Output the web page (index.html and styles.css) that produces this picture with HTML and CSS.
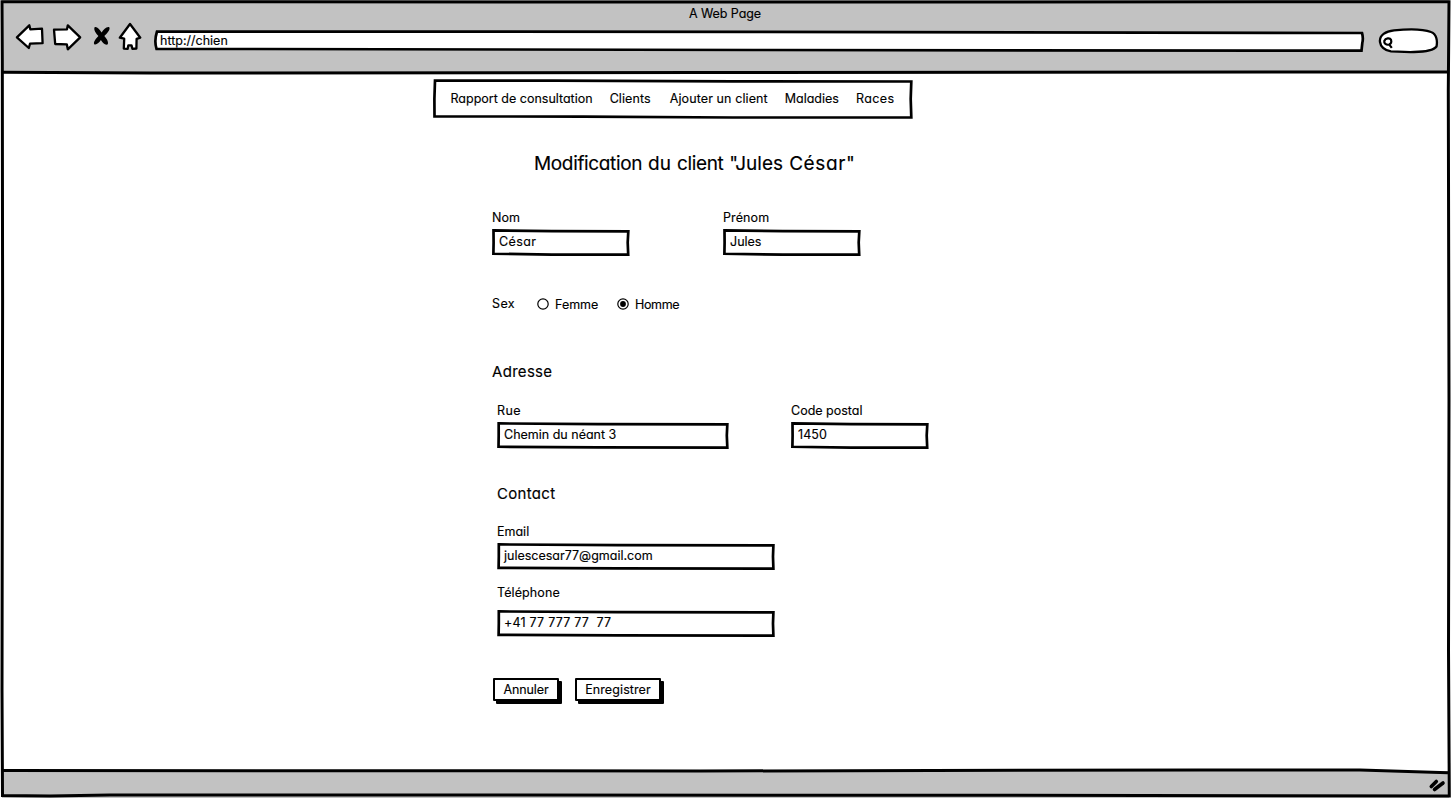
FILE: index.html
```html
<!DOCTYPE html>
<html lang="fr">
<head>
<meta charset="utf-8">
<title>A Web Page</title>
<link rel="stylesheet" href="styles.css">
</head>
<body>
<div class="browser">
  <header class="chrome">
    <div class="page-title"><span class="tight">A Web Page</span></div>
    <div class="toolbar">
      <svg class="nav-icons" width="128" height="30" viewBox="15 22 128 30">
        <g fill="#fff" stroke="#000" stroke-width="2.300" stroke-linejoin="round">
          <path d="M16.900 37.300L29.300 25.300L30.300 29.300L42 28.700L42.600 43.200L30 43.700L28.800 48Z"/>
          <path d="M54 29.600L67 29.300L67.800 25.300L80.200 37.300L67.800 49.300L66.800 44.300L55.200 44Z"/>
          <path d="M130 24L140.300 37.700L136.600 38.800L136.400 48.500L132.400 48.800L131.500 45.400L128.300 45.400L127.700 48.800L123.800 48.600L124.200 38.600L119.800 37.700Z"/>
        </g>
        <path d="M94.600 27.200C97 26.300 99.600 29.600 101.600 32.600C103.500 29.500 106.400 26.500 109.300 27.200C110.600 29.500 107 33.500 104.300 36C106.500 38.500 108.800 41.600 107.800 44.300C105.300 45.700 102.600 42.600 100.900 40C99 42.600 96.700 45.300 94.200 44.300C93.100 41.900 96.100 38.400 98.400 36C96 33.400 93.400 29.900 94.600 27.200Z"/>
      </svg>
      <div class="address">
        <svg class="sketch" viewBox="0 0 1210 22" preserveAspectRatio="none"><path class="ink" d="M3 1.500L600 1.800L1208 3Q1209.500 8 1208.300 13L1207.500 20.700L600 20L2.500 18.800Q0 11 3 1.500Z"/></svg>
        <span>http://chien</span>
      </div>
      <svg class="search" width="62" height="28" viewBox="1378 27 62 28">
        <path d="M1380 42C1379 35 1386 31.200 1394 30.400C1408 29 1424 29.400 1431 32C1437 34 1437.500 42 1436.500 46.500C1434 50 1424 51.800 1414 52C1404 52.300 1398 51.500 1391 51.300C1384 50.500 1380.500 46 1380 42Z" fill="#fff" stroke="#000" stroke-width="2.300"/>
        <path d="M1389.300 44.600C1386 45.300 1383.800 43.300 1384.300 41C1385.500 38 1389.900 37.600 1391 39.800C1391.800 42 1391 44 1389 44.400M1388.700 43.800L1391.800 47.800" fill="none" stroke="#000" stroke-width="2.200"/>
      </svg>
    </div>
  </header>
  <main class="content">
    <nav class="menu">
      <svg class="sketch" viewBox="0 0 480 40" preserveAspectRatio="none"><path class="ink" d="M2 1.500L120 1.700L300 2.300L478.300 2.500L477.700 20L478.300 38.500L300 38.500L150 37.600L1.500 37.400L1.400 20Z"/></svg>
      <span>Rapport de consultation</span>
      <span class="loose-1">Clients</span>
      <span class="loose-1 third">Ajouter un client</span>
      <span>Maladies</span>
      <span class="loose-4">Races</span>
    </nav>
    <h1><span class="narrow">Modification</span> du <span class="narrow">client</span> "Jules <span class="wide">César"</span></h1>
    <form class="form">
      <div class="row names">
        <label class="field short"><span>Nom</span>
          <span class="box"><svg class="sketch" viewBox="0 0 138 28" preserveAspectRatio="none"><path class="ink" d="M1.500 1.500L60 2.200L136.300 2.500L135.700 14L136.200 26.500L60 26.500L1.400 25.700L1.600 14Z"/></svg><span class="loose-4">César</span></span></label>
        <label class="field short"><span class="loose-1">Prénom</span>
          <span class="box"><svg class="sketch" viewBox="0 0 138 28" preserveAspectRatio="none"><path class="ink" d="M1.500 1.500L60 2.200L136.300 2.500L135.700 14L136.200 26.500L60 26.500L1.400 25.700L1.600 14Z"/></svg><span>Jules</span></span></label>
      </div>
      <div class="row sex">
        <span class="sex-label loose-4">Sex</span>
        <span class="option"><svg width="12" height="12" viewBox="0 0 12 12"><circle class="ring" cx="6" cy="6" r="5.200"/></svg><span>Femme</span></span>
        <span class="option"><svg width="12" height="12" viewBox="0 0 12 12"><circle class="ring" cx="6" cy="6" r="5.200"/><circle cx="6" cy="6" r="2.900"/></svg><span class="narrow">Homme</span></span>
      </div>
      <h2 class="address-title">Adresse</h2>
      <div class="row street">
        <label class="field medium"><span class="loose-4">Rue</span>
          <span class="box"><svg class="sketch" viewBox="0 0 138 28" preserveAspectRatio="none"><path class="ink" d="M1 1.500L60 2.200L137 2.500L136.700 14L137 26.500L60 26.300L.9 25.700L1 14Z"/></svg><span>Chemin du néant 3</span></span></label>
        <label class="field short"><span>Code postal</span>
          <span class="box"><svg class="sketch" viewBox="0 0 138 28" preserveAspectRatio="none"><path class="ink" d="M1.500 1.500L60 2.200L136.300 2.500L135.700 14L136.200 26.500L60 26.500L1.400 25.700L1.600 14Z"/></svg><span class="loose-1">1450</span></span></label>
      </div>
      <h2 class="contact-title">Contact</h2>
      <label class="field long email"><span>Email</span>
        <span class="box"><svg class="sketch" viewBox="0 0 138 28" preserveAspectRatio="none"><path class="ink" d="M.9 1.500L60 2.200L137.200 2.500L137 14L137.200 26.500L60 26.300L.8 25.700L.9 14Z"/></svg><span>julescesar77@gmail.com</span></span></label>
      <label class="field long phone"><span class="loose-1">Téléphone</span>
        <span class="box"><svg class="sketch" viewBox="0 0 138 28" preserveAspectRatio="none"><path class="ink" d="M.9 1.500L60 2.200L137.200 2.500L137 14L137.200 26.500L60 26.300L.8 25.700L.9 14Z"/></svg><span class="loose-2">+41 77 777 77&nbsp; 77</span></span></label>
      <div class="row actions">
        <button type="button" class="btn cancel"><span class="tight">Annuler</span></button>
        <button type="button" class="btn save"><span class="loose-1">Enregistrer</span></button>
      </div>
    </form>
  </main>
  <footer class="status">
    <svg width="20" height="16" viewBox="1428 777 20 16"><g stroke="#000" stroke-linecap="round" stroke-width="3.600"><path d="M1431.300 786.500L1436.300 781.500"/><path d="M1434.500 789.500L1443 783"/></g></svg>
  </footer>
  <svg class="frame" width="1451" height="798" viewBox="0 0 1451 798">
    <g fill="none" stroke="#000" stroke-width="3">
      <path d="M2 1.800L700 2L1449 1.800L1448.300 90L1449 400L1448.500 650L1449.300 796L1000 795.300L400 795L110 795L50 796L2.500 795.500L2 690L2.600 300L2.300 60Z"/>
      <path d="M3 72.300L150 73L700 72.500L1448 72"/>
      <path d="M3 770.500L700 771L1200 770L1360 770L1448 772.800"/>
    </g>
  </svg>
</div>
</body>
</html>
```
FILE: styles.css
```css
* { box-sizing: border-box; }
body {
  margin: 0;
  width: 1451px;
  height: 798px;
  overflow: hidden;
  background: #fff;
  color: #000;
  font: 12.500px/16px Inter, "Liberation Sans", sans-serif;
  font-feature-settings: "cv11" 1;
  -webkit-text-stroke: .15px #000;
}
.narrow { letter-spacing: -.35px; }
.tight { letter-spacing: -.08px; }
.loose-1 { letter-spacing: .1px; }
.loose-2 { letter-spacing: .22px; }
.loose-4 { letter-spacing: .4px; }
.wide { letter-spacing: .6px; }
.browser { position: relative; display: flex; flex-direction: column; height: 798px; }
.frame { position: absolute; inset: 0; pointer-events: none; }
.chrome { height: 73px; background: #c2c2c2; margin: 0 2px; }
.page-title { padding-top: 6px; padding-left: 687px; height: 22px; }
.toolbar { display: flex; align-items: flex-start; padding-left: 13px; }
.nav-icons { flex: none; }
.address { position: relative; width: 1210px; height: 22px; margin: 8px 0 0 11px; padding: 3px 0 0 6px; }
.address span, .box span, .menu span { position: relative; white-space: pre; }
.search { margin: 5px 0 0 14px; flex: none; }
.sketch { position: absolute; left: 0; top: 0; width: 100%; height: 100%; overflow: visible; }
.ink { fill: #fff; stroke: #000; stroke-width: 2.700px; vector-effect: non-scaling-stroke; }
.content { flex: 1; padding: 6px 0 0 433px; }
.menu { position: relative; display: flex; width: 480px; height: 40px; padding: 12px 0 0 17.500px; gap: 17px; }
.third { margin-left: 2px; }
h1 { margin: 33px 0 0 101px; font-size: 19px; line-height: 24px; font-weight: 400; letter-spacing: .06px; word-spacing: .5px; }
h2 { font-size: 15px; line-height: 20px; font-weight: 400; letter-spacing: .3px; }
.form { padding: 34px 0 0 59px; }
.row { display: flex; }
.field { display: flex; flex-direction: column; gap: 3px; }
.box { position: relative; display: block; height: 27px; padding: 5px 0 0 7px; }
.short { width: 138px; }
.medium { width: 232px; }
.long { width: 278px; }
.names { gap: 93px; }
.sex { margin-top: 40px; height: 18px; align-items: center; }
.sex-label { width: 45px; padding-bottom: 2px; }
.option { display: flex; align-items: center; gap: 6px; width: 80px; }
.option svg { overflow: visible; margin-top: -2px; }
.ring { fill: #fff; stroke: #000; stroke-width: 1.200px; }
.address-title { margin: 48px 0 0; }
.street { margin: 21px 0 0 5px; gap: 62px; }
.contact-title { margin: 35px 0 0 5px; }
.email { margin: 20px 0 0 5px; }
.phone { margin: 15px 0 0 5px; gap: 9px; }
.actions { margin-top: 41px; gap: 16px; padding-left: 1px; }
.btn {
  height: 23px; padding: 0; border: 2px solid #000; border-radius: 1px; background: #fff;
  box-shadow: 3px 3px 0 #000; color: #000; font: inherit; font-feature-settings: inherit;
}
.cancel { width: 66px; }
.save { width: 86px; }
.status { height: 27px; display: flex; justify-content: flex-end; margin: 0 2px; padding: 6px 1px 0 0; background: #c2c2c2; }
```
